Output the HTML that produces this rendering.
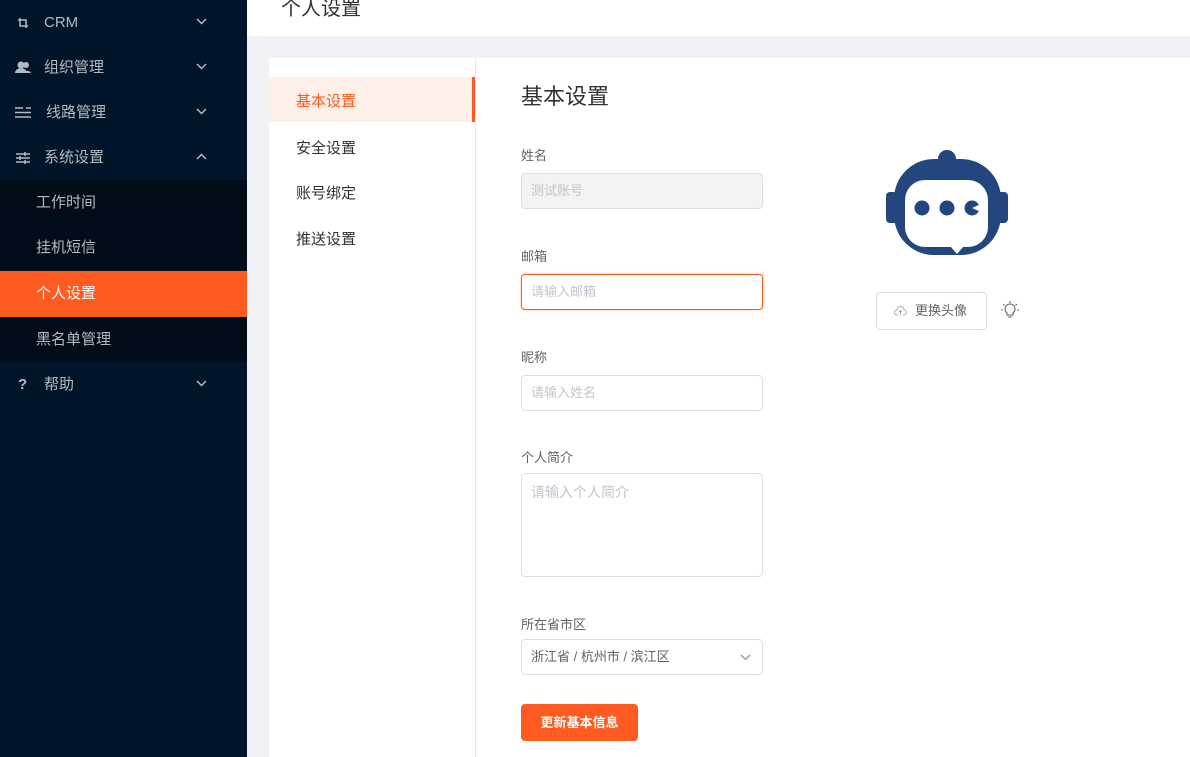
<!DOCTYPE html>
<html><head><meta charset="utf-8"><style>
*{margin:0;padding:0;box-sizing:border-box}
body{width:1190px;height:757px;overflow:hidden;position:relative;background:#f0f2f5;font-family:"Liberation Sans","Noto Sans CJK SC",sans-serif;}
.a{position:absolute}
.side{left:0;top:0;width:247px;height:757px;background:#001529}
.mi{position:absolute;left:0;width:247px;height:46px;color:#b4bac0;font-size:15px;line-height:46px}
.mi .t{position:absolute;left:44px}
.mi svg.ar{position:absolute;left:196px;top:18px}
.sub{position:absolute;left:0;width:247px;height:45px;background:#000c17;color:#b4bac0;font-size:15px;line-height:45px;padding-left:36px}
.lbl{position:absolute;left:521px;font-size:13px;color:#606266}
.inp{position:absolute;left:521px;width:242px;height:36px;border:1px solid #dcdfe6;border-radius:4px;font-size:13px;color:#c0c4cc;line-height:34px;padding-left:9px;background:#fff}
</style></head><body>
<div class="a side">
 <div class="mi" style="top:0"><svg class="a" style="left:17px;top:17px" width="12" height="12" viewBox="0 0 12 12" fill="none" stroke="#b4bac0" stroke-width="1.5"><path d="M3 1v8h8M1 3h8v8"/></svg><span class="t">CRM</span><svg class="ar" width="11" height="7" viewBox="0 0 11 7"><path d="M1 1l4.5 4.5L10 1" fill="none" stroke="#b4bac0" stroke-width="1.5"/></svg></div>
 <div class="mi" style="top:45px"><svg class="a" style="left:15px;top:16px" width="16" height="12" viewBox="0 0 16 12" fill="#b4bac0"><circle cx="6" cy="4" r="3.5"/><path d="M0 12a6 5 0 0 1 12 0z"/><circle cx="11" cy="4" r="3"/><path d="M9 12a4 4 0 0 1 7 0z"/></svg><span class="t">组织管理</span><svg class="ar" width="11" height="7" viewBox="0 0 11 7"><path d="M1 1l4.5 4.5L10 1" fill="none" stroke="#b4bac0" stroke-width="1.5"/></svg></div>
 <div class="mi" style="top:90px"><svg class="a" style="left:14px;top:16px" width="18" height="13" viewBox="0 0 18 13" fill="none" stroke="#b4bac0" stroke-width="1.5"><path d="M1 2h8M1 6.5h16M1 11h16M12 2h5"/></svg><span class="t" style="left:46px">线路管理</span><svg class="ar" width="11" height="7" viewBox="0 0 11 7"><path d="M1 1l4.5 4.5L10 1" fill="none" stroke="#b4bac0" stroke-width="1.5"/></svg></div>
 <div class="mi" style="top:135px"><svg class="a" style="left:15px;top:17px" width="16" height="12" viewBox="0 0 16 12" fill="none" stroke="#b4bac0" stroke-width="1.5"><path d="M1 2h14M1 6h14M1 10h14M10 0v4M5 4v4M10 8v4"/></svg><span class="t">系统设置</span><svg class="ar" width="11" height="7" viewBox="0 0 11 7"><path d="M1 6l4.5-4.5L10 6" fill="none" stroke="#b4bac0" stroke-width="1.5"/></svg></div>
 <div class="sub" style="top:180px">工作时间</div>
 <div class="sub" style="top:225px">挂机短信</div>
 <div class="sub" style="top:271px;height:46px;line-height:46px;background:#ff5a1f;color:#fff">个人设置</div>
 <div class="sub" style="top:317px">黑名单管理</div>
 <div class="mi" style="top:362px"><span class="a" style="left:18px;font-weight:bold">?</span><span class="t">帮助</span><svg class="ar" width="11" height="7" viewBox="0 0 11 7"><path d="M1 1l4.5 4.5L10 1" fill="none" stroke="#b4bac0" stroke-width="1.5"/></svg></div>
</div>
<div class="a" style="left:247px;top:0;width:943px;height:36px;background:#fff"></div>
<div class="a" style="left:281px;top:-8px;font-size:20px;color:#303133">个人设置</div>
<div class="a" style="left:269px;top:58px;width:921px;height:699px;background:#fff"></div>
<div class="a" style="left:475px;top:58px;width:1px;height:699px;background:#e8e8e8"></div>
<div class="a" style="left:269px;top:77px;width:206px;height:45px;background:#fef0e8;border-right:3px solid #ff5a1f"></div>
<div class="a" style="left:296px;top:90px;font-size:15px;color:#ff5a1f">基本设置</div>
<div class="a" style="left:296px;top:137px;font-size:15px;color:#303133">安全设置</div>
<div class="a" style="left:296px;top:182px;font-size:15px;color:#303133">账号绑定</div>
<div class="a" style="left:296px;top:228px;font-size:15px;color:#303133">推送设置</div>
<div class="a" style="left:521px;top:79px;font-size:22px;color:#303133">基本设置</div>
<div class="lbl" style="top:145px">姓名</div>
<div class="inp" style="top:173px;background:#f3f3f3;color:#c0c4cc">测试账号</div>
<div class="lbl" style="top:246px">邮箱</div>
<div class="inp" style="top:274px;border-color:#ff5a1f;box-shadow:0 0 2px #ffb090">请输入邮箱</div>
<div class="lbl" style="top:347px">昵称</div>
<div class="inp" style="top:375px">请输入姓名</div>
<div class="lbl" style="top:447px">个人简介</div>
<div class="inp" style="top:473px;height:104px;font-size:14px;line-height:36px">请输入个人简介</div>
<div class="lbl" style="top:614px">所在省市区</div>
<div class="inp" style="top:639px;color:#606266">浙江省 / 杭州市 / 滨江区<svg class="a" style="left:218px;top:14px" width="11" height="7" viewBox="0 0 11 7"><path d="M1 1l4.5 4.5L10 1" fill="none" stroke="#909399" stroke-width="1.3"/></svg></div>
<div class="a" style="left:521px;top:704px;width:117px;height:37px;background:#ff5a1f;border-radius:4px;color:#fff;font-size:13px;font-weight:bold;line-height:37px;text-align:center">更新基本信息</div>
<svg class="a" style="left:884px;top:150px" width="126" height="108" viewBox="0 0 126 108">
 <g fill="#23467f">
 <circle cx="63" cy="9" r="9"/>
 <rect x="2" y="42" width="12" height="31" rx="4"/>
 <rect x="112" y="42" width="12" height="31" rx="4"/>
 <rect x="10" y="9" width="107" height="96" rx="40"/>
 </g>
 <rect x="21" y="30" width="83" height="67" rx="20" fill="#fff"/>
 <path d="M66 96h14l-7 8z" fill="#fff"/>
 <g fill="#23467f"><circle cx="38" cy="58" r="7.5"/><circle cx="63" cy="58" r="7.5"/><circle cx="88" cy="58" r="7.5"/></g>
 <path d="M88 58l9-4v8z" fill="#fff"/>
</svg>
<div class="a" style="left:876px;top:292px;width:111px;height:38px;border:1px solid #dcdfe6;border-radius:4px;font-size:13px;color:#606266;line-height:36px;padding-left:38px">更换头像<svg class="a" style="left:17px;top:13px" width="13" height="10" viewBox="0 0 13 10" fill="none" stroke="#aaa" stroke-width="1"><path d="M4 9H3a2.5 2.5 0 0 1 0-5 3.5 3.5 0 0 1 7 0 2.5 2.5 0 0 1 0 5H9M6.5 9V4.5M4.8 6.2l1.7-1.7 1.7 1.7"/></svg></div>
<svg class="a" style="left:1000px;top:300px" width="20" height="20" viewBox="0 0 20 20" fill="none" stroke="#666" stroke-width="1.1"><path d="M7 13a5 5 0 1 1 6 0v2H7z M8 17h4M10 1v2M3 4l1.5 1.5M17 4l-1.5 1.5M1 10h2M17 10h2"/></svg>
</body></html>
